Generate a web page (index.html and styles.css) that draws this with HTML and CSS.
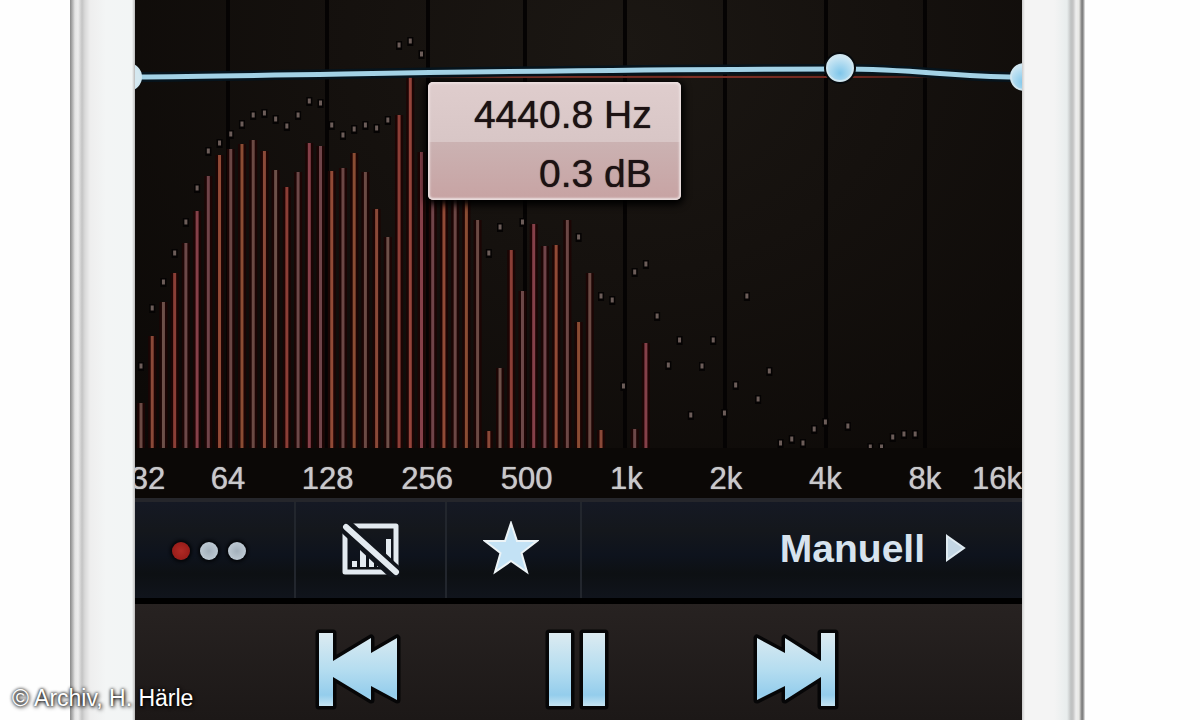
FILE: index.html
```html
<!DOCTYPE html>
<html lang="de">
<head>
<meta charset="utf-8">
<meta name="viewport" content="width=device-width, initial-scale=1">
<title>Equalizer</title>
<link rel="stylesheet" href="styles.css">
</head>
<body>
<div class="page">
  <div class="bezel bezel-left"></div>
  <main class="screen">
    <section class="analyzer">
      <svg class="spectrum" viewBox="135 0 887 448" preserveAspectRatio="none" role="img" aria-label="Frequenzspektrum">
        <defs>
          <radialGradient id="knob" cx="50%" cy="70%" r="65%">
            <stop offset="0" stop-color="#7fc6ea"/><stop offset="1" stop-color="#cfe8f4"/>
          </radialGradient>
          <linearGradient id="zero" x1="0" x2="1">
            <stop offset="0" stop-color="#a03c2e" stop-opacity="0"/><stop offset=".2" stop-color="#8e3a2e"/><stop offset=".8" stop-color="#6e261e"/><stop offset="1" stop-color="#6e261e" stop-opacity="0"/>
          </linearGradient>
        </defs>
        <path class="gridlines" d="M228 0V448M327 0V448M428 0V448M525 0V448M625 0V448M725 0V448M826 0V448M925 0V448"/>
        <g id="bars"></g>
        <g id="peaks"></g>
        <rect x="400" y="76" width="570" height="2" fill="url(#zero)"/>
        <path class="curve-edge" d="M135 77C330 75 560 69 840 69C920 69 950 77 1022 77"/>
        <path class="curve" d="M135 77C330 75 560 69 840 69C920 69 950 77 1022 77"/>
        <circle class="knob-edge" cx="840" cy="68" r="16"/>
        <circle class="knob" cx="840" cy="68" r="13"/>
        <circle class="knob pale" cx="128" cy="77" r="13"/>
        <circle class="knob" cx="1024" cy="77" r="13"/>
      </svg>
      <div class="tooltip"><span>4440.8 Hz</span><span>0.3 dB</span></div>
    </section>
    <div class="scale">
      <span class="first">32</span><span>64</span><span>128</span><span>256</span><span>500</span><span>1k</span><span>2k</span><span>4k</span><span>8k</span><span class="last">16k</span>
    </div>
    <nav class="toolbar">
      <div class="pages">
        <input type="radio" name="page" aria-label="Seite 1" checked>
        <input type="radio" name="page" aria-label="Seite 2">
        <input type="radio" name="page" aria-label="Seite 3">
      </div>
      <button type="button" aria-label="Spektrum ausblenden">
        <svg width="58" height="54" viewBox="0 0 58 54">
          <path d="M3 3H54V49H3Z" fill="none" stroke="#e3eaf0" stroke-width="5" stroke-linejoin="round"/>
          <path d="M10 38h5v6h-5zM18 27h6v17h-6zM27 34h5v10h-5zM35 38h5v6h-5zM44 16h5v22h-5z" fill="#e3eaf0"/>
          <path d="M0 0L58 54" stroke="#11151c" stroke-width="15"/>
          <path d="M4 4L54 49" stroke="#e3eaf0" stroke-width="6" stroke-linecap="round"/>
        </svg>
      </button>
      <button type="button" class="favorite" aria-label="Favorit">
        <svg width="56" height="54" viewBox="0 0 56 54">
          <path d="M28 2L34 20H54L38.500 32L44 51L28 40L12 51L17.500 32L2 20H22Z" fill="#c3e2f5" stroke="#edf4f7" stroke-width="2"/>
        </svg>
      </button>
      <button type="button" class="preset">
        <span>Manuell</span>
        <svg width="20" height="28" viewBox="0 0 20 28"><path d="M1 2L18 14L1 26Z" fill="#c3d6e4" stroke="#e0ebf2" stroke-width="2"/></svg>
      </button>
    </nav>
    <div class="player">
      <button type="button" aria-label="Vorheriger Titel">
        <svg class="glyph" width="88" height="84" viewBox="0 0 88 84">
          <defs><linearGradient id="ice" gradientUnits="userSpaceOnUse" x1="0" y1="5" x2="0" y2="78"><stop offset="0" stop-color="#dcebf1"/><stop offset=".5" stop-color="#b5ddf0"/><stop offset=".85" stop-color="#94cdec"/><stop offset="1" stop-color="#c5e4f2"/></linearGradient></defs>
          <path d="M5 5H19V33L57 10V25L83 10V72L57 58V72L19 49V78H5Z"/>
        </svg>
      </button>
      <button type="button" aria-label="Pause">
        <svg class="glyph" width="68" height="84" viewBox="0 0 68 84"><path d="M6 5H28V78H6ZM40 5H62V78H40Z"/></svg>
      </button>
      <button type="button" aria-label="Nächster Titel">
        <svg class="glyph" width="88" height="84" viewBox="0 0 88 84"><path d="M83 5H69V33L33 10V25L5 10V72L33 58V72L69 49V78H83Z"/></svg>
      </button>
    </div>
  </main>
  <div class="bezel bezel-right"></div>
  <small class="credit">© Archiv, H. Härle</small>
</div>
<script src="spectrum.js"></script>
</body>
</html>
```
FILE: styles.css
```css
* { box-sizing: border-box; }
body { margin: 0; background: #fefefe; font-family: "Liberation Sans", Arial, sans-serif; }
button { border: 0; margin: 0; padding: 0; background: none; color: inherit; font: inherit; display: flex; align-items: center; justify-content: center; }
svg { display: block; }

.page { position: relative; display: grid; grid-template-columns: 65px minmax(0, 1fr) 63px; padding: 0 115px 0 70px; min-height: 100vh; overflow: hidden; }
.bezel-left { background: linear-gradient(90deg, #888 0, #aaa 2px, #e4e4e4 5px, #ededed 8px, #c4c4c4 12px, #dadada 15px, #eee 20px, #f3f5f5 36px, #f2f5f5 62px, #bbb 65px); }
.bezel-right { background: linear-gradient(90deg, #ccc 0, #f4f4f4 3px, #f4f4f4 32px, #e8eded 45px, #bfc1c1 49px, #c4c4c4 51px, #eee 54px, #e8e8e5 57px, #777 60px, #8a8a8a 61px, #eee 63px); }

.screen { display: flex; flex-direction: column; overflow: hidden; background: #0b0806; }
.analyzer { position: relative; flex: 1; display: flex; min-height: 300px; background: radial-gradient(ellipse at 55% 10%, #1b1713 0, #15110e 40%, #0b0806 100%); }
.spectrum { width: 100%; flex: 1; }
.gridlines { stroke: #050303; stroke-width: 4; }
.curve { fill: none; stroke: #a3d2e6; stroke-width: 5; }
.curve-edge { fill: none; stroke: #06141d; stroke-width: 10; }
.knob { fill: url(#knob); stroke: #cfe6f0; stroke-width: 2; }
.knob.pale { fill: #d5e8f0; }
.knob-edge { fill: #070b0e; }

.tooltip { position: absolute; left: 33%; top: 82px; width: 253px; padding-right: 29px; display: grid; grid-template-rows: 60px 58px; align-items: center; text-align: right; font-size: 39px; line-height: 1; color: #1c1213; text-shadow: 0 0 1px #1c1213; border-radius: 5px; background: linear-gradient(#dfcdcd 0, #d8c6c6 60px, #cbb2b2 60px, #c7a3a3 100%); box-shadow: inset 0 0 2px 2px #eadede, 0 2px 7px 3px #000; }
.tooltip span { padding-top: 4px; }

.scale { height: 50px; display: grid; grid-template-columns: minmax(0, 43fr) repeat(8, minmax(0, 99fr)) minmax(0, 47fr); align-items: center; justify-items: center; padding-top: 10px; font-size: 31px; line-height: 1; color: #c9c9cb; text-shadow: 0 0 1px #c9c9cb; }
.first { justify-self: end; padding-right: 13px; }
.last { justify-self: end; }

.toolbar { height: 106px; display: grid; grid-template-columns: 159fr 151fr 135fr 442fr; border-top: 4px solid #25262b; border-bottom: 6px solid #000; background: linear-gradient(#151924 0, #14171c 30%, #0e131d 55%, #0d1013 75%, #10141c 100%); }
.toolbar > * + * { border-left: 2px solid #22262d; }
.pages { display: flex; align-items: center; justify-content: center; gap: 10px; padding: 2px 12px 0 0; }
.pages input { appearance: none; width: 18px; height: 18px; margin: 0; border-radius: 50%; background: radial-gradient(#a3b0bb, #c8d3dc); box-shadow: 0 0 3px 2px #05070a; }
.pages input:checked { background: radial-gradient(#b02a25, #8f1714); }
.toolbar .favorite { padding: 0 6px 4px 0; }
.toolbar .preset { justify-content: flex-end; gap: 21px; padding: 0 56px 4px 0; font-size: 39px; font-weight: 700; line-height: 1; color: #d7e3ee; }

.player { height: 116px; display: grid; grid-template-columns: repeat(3, minmax(0, 219px)); justify-content: center; padding: 14px 4px 0 0; align-items: start; background: linear-gradient(#272221, #1c1817); }
.player button { padding-top: 10px; }
.glyph path { fill: url(#ice); stroke: #060607; stroke-width: 7; stroke-linejoin: round; paint-order: stroke; }

.credit { position: absolute; left: 12px; bottom: 10px; font-size: 23px; line-height: 1; color: #fff; text-shadow: 0 0 3px #000, 1px 1px 4px #000; }
```
FILE: spectrum.js
```js
const BASE = 448;
const FIRST = 141;
const STEP = 11.22;

// Top edge of each band's bar; null means the band is silent.
const bars = [403, 336, 302, 273, 243, 211, 176, 155, 149, 144, 140, 151, 170, 187, 172, 143, 146, 171, 168, 153,
  172, 209, 237, 115, 77, 152, 190, 190, 190, 190, 220, 431, 368, 250, 291, 224, 246, 245, 220, 322, 273, 430, null, null, 429, 343];

// Held peak of each band.
const peaks = [366, 308, 282, 253, 222, 188, 151, 143, 134, 124, 115, 113, 119, 126, 115, 101, 103, 125, 135, 129,
  125, 128, 120, 45, 41, 54, null, null, null, null, null, 253, 227, null, 222, null, null, null, null, 237,
  null, 296, 300, 386, 272, 264, 316, 365, 340, 415, 366, 340, 413, 385, 296, 399, 371, 443, 439, 443,
  429, 422, null, 426, null, 447, 447, 437, 434, 434];

const colors = ['#6b4a44', '#8a4938', '#6d5049', '#8b3e36', '#6c4848', '#854049', '#6f4449', '#914a36', '#6b4745', '#8a4c33'];

function rect(parent, x, y, width, height, fill) {
  const el = document.createElementNS('http://www.w3.org/2000/svg', 'rect');
  const attrs = { x, y, width, height, fill };
  for (const name in attrs) el.setAttribute(name, attrs[name]);
  parent.appendChild(el);
}

const barGroup = document.getElementById('bars');
bars.forEach((top, i) => {
  if (top === null) return;
  const x = FIRST + i * STEP;
  rect(barGroup, x - 4, top, 8, BASE - top, '#1c0504');
  rect(barGroup, x - 1.5, top, 3, BASE - top, i === 24 ? '#94443b' : colors[i % colors.length]);
});

const peakGroup = document.getElementById('peaks');
peaks.forEach((y, i) => {
  if (y === null) return;
  const x = FIRST + i * STEP;
  rect(peakGroup, x - 3, y - 4, 6, 9, '#050303');
  rect(peakGroup, x - 1.5, y - 2.5, 3, 5, '#6c5d59');
});
```
